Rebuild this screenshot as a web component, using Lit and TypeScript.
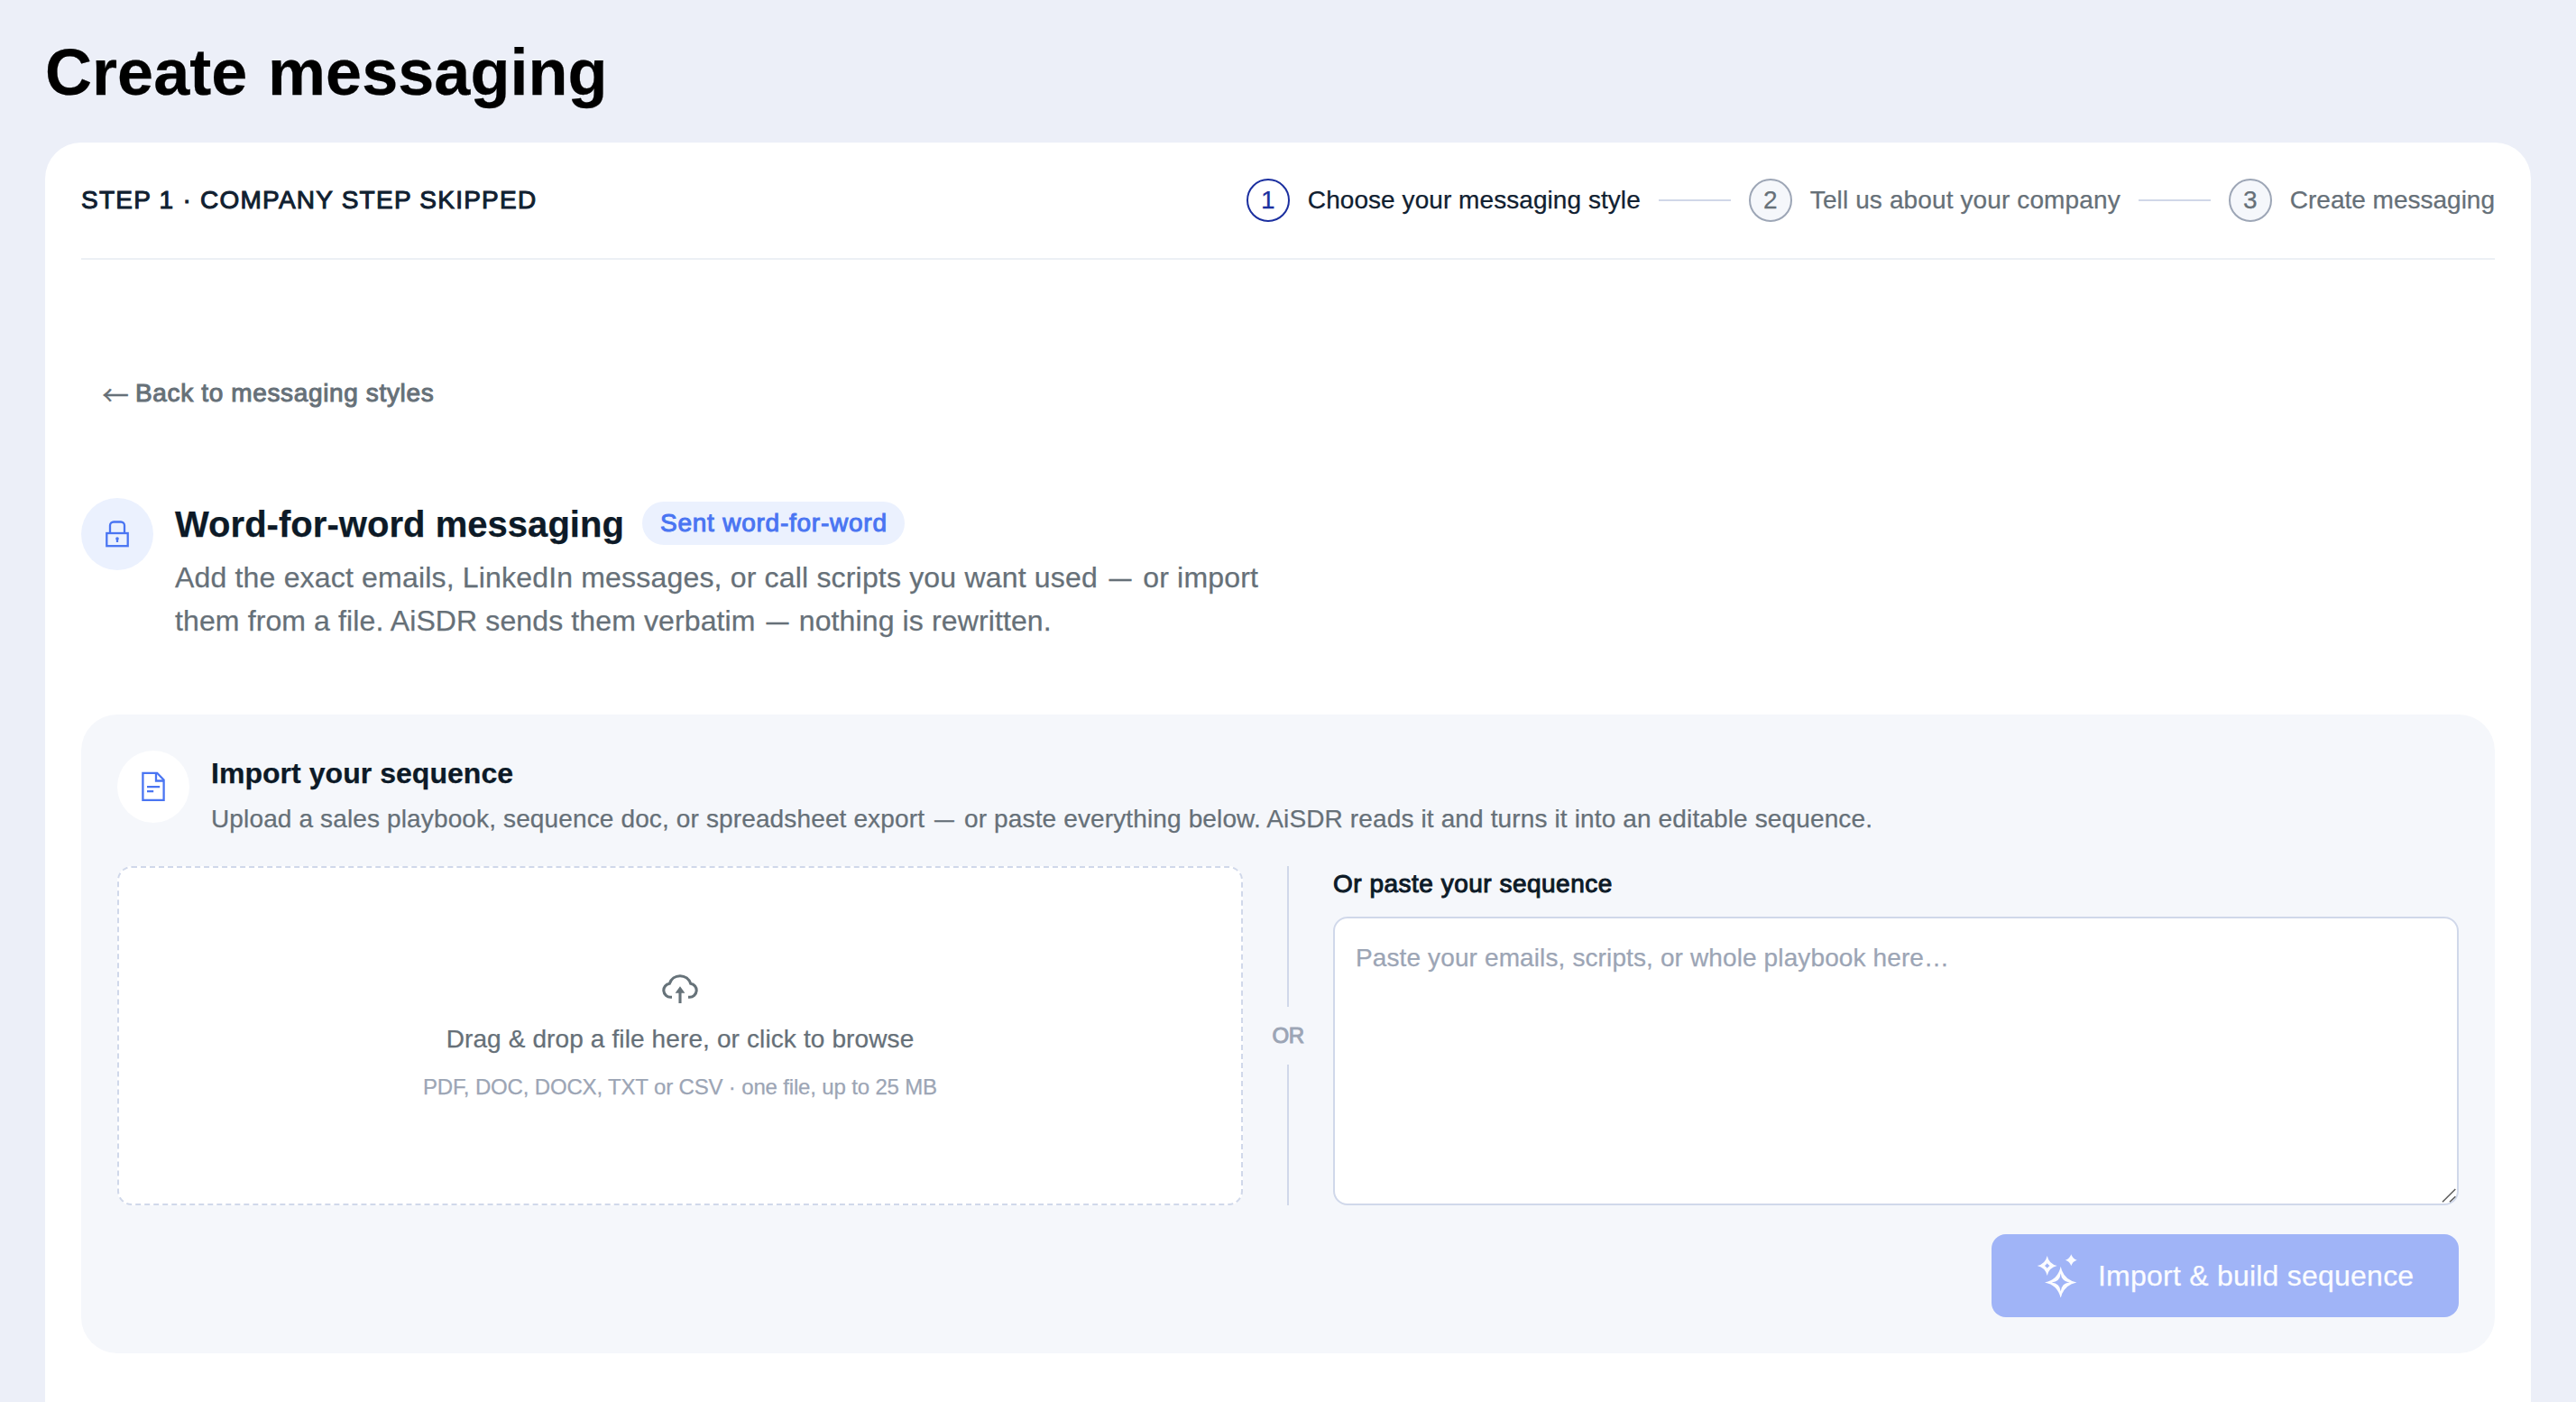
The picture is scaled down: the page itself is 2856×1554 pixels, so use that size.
import { LitElement, html, css, svg, nothing } from "lit";
import { customElement } from "lit/decorators.js";
import { classMap } from "lit/directives/class-map.js";

interface Step {
  label: string;
  key: string;
  active: boolean;
}

const STEPS: Step[] = [
  { label: "Choose your messaging style", key: "style", active: true },
  { label: "Tell us about your company", key: "company", active: false },
  { label: "Create messaging", key: "create", active: false },
];

/** Four-pointed star with concave sides. */
const star = (cx: number, cy: number, r: number, k: number) => {
  const c = r * k;
  return (
    `M${cx} ${cy - r}Q${cx + c} ${cy - c} ${cx + r} ${cy}` +
    `Q${cx + c} ${cy + c} ${cx} ${cy + r}` +
    `Q${cx - c} ${cy + c} ${cx - r} ${cy}` +
    `Q${cx - c} ${cy - c} ${cx} ${cy - r}Z`
  );
};

const lockIcon = svg`<svg class="glyph" viewBox="0 0 80 80" fill="none" stroke="#4a75f2" stroke-width="2.3">
  <rect x="28.3" y="39" width="23.4" height="14.2"></rect>
  <path d="M32 39V30.5a4 4 0 0 1 4-4h8a4 4 0 0 1 4 4V39"></path>
  <circle cx="40" cy="45" r="1.8" fill="#4a75f2" stroke="none"></circle>
  <path d="M40 45V49"></path>
</svg>`;

const docIcon = svg`<svg class="glyph" viewBox="0 0 80 80" fill="none" stroke="#4a75f2" stroke-width="2.3">
  <path d="M28.4 24.8H44.2L51.6 32.4V54.9H28.4Z"></path>
  <path d="M43 24.7V33.5H51.7"></path>
  <path d="M33 40.2H47.2M33 45.1H40.2"></path>
</svg>`;

const cloudIcon = svg`<svg class="cloud" viewBox="0 0 40 32" fill="none" stroke="#667279" stroke-width="3.1">
  <path d="M11 25.2H9.6A7.54 7.54 0 0 1 8.3 10.2A12.3 12.3 0 0 1 31.7 10.2A7.54 7.54 0 0 1 30.4 25.2H29"></path>
  <path d="M20 32V18"></path>
  <path d="M20 13.3L25.4 20.8H14.6Z" fill="#667279" stroke="none"></path>
</svg>`;

const sparkIcon = svg`<svg class="spark" viewBox="0 0 48 48" fill="#fbfcff" fill-rule="evenodd">
  <path d="${star(28.7, 31.4, 17.7, 0.17)}${star(28.7, 31.4, 10, 0.08)}"></path>
  <path d="${star(13.7, 13, 11, 0.18)}${star(13.7, 13, 2.8, 0.4)}"></path>
  <path d="${star(40.3, 6.7, 6.4, 0.24)}"></path>
</svg>`;

@customElement("app-root")
export class AppRoot extends LitElement {
  static styles = css`
    :host {
      display: block;
      box-sizing: border-box;
      width: 100%;
      height: 100vh;
      overflow: hidden;
      padding: 40px 50px 0;
      background: #eceff8;
      color: #0d1a27;
      font-family: "Liberation Sans", Arial, sans-serif;
      font-size: 28px;
      line-height: 40px;
      -webkit-text-stroke: 0.25px currentColor;
    }
    * {
      box-sizing: border-box;
      margin: 0;
    }
    .title {
      font-size: 72px;
      line-height: 80px;
      font-weight: 700;
      color: #000;
      letter-spacing: 0.05px;
      word-spacing: 2.5px;
      margin-bottom: 38px;
    }
    .card {
      height: 1500px;
      padding: 40px 40px 0;
      background: #fff;
      border-radius: 40px 40px 0 0;
    }
    .medium {
      -webkit-text-stroke: 1px currentColor;
    }
    .head {
      display: flex;
      align-items: center;
      justify-content: space-between;
      height: 90px;
      padding-bottom: 40px;
      border-bottom: 2px solid #ecf0f5;
      white-space: nowrap;
    }
    .caption {
      color: #102030;
      letter-spacing: 1.24px;
    }
    .steps,
    .step {
      display: flex;
      align-items: center;
      gap: 20px;
    }
    .step {
      color: #667078;
    }
    .num {
      display: flex;
      align-items: center;
      justify-content: center;
      width: 48px;
      height: 48px;
      border: 2px solid #9da6b6;
      border-radius: 50%;
      background: #f5f7fb;
    }
    .active .num {
      border-color: #1b2f9f;
      background: #fff;
      color: #1b2f9f;
    }
    .active .label {
      color: #102030;
    }
    .style .label {
      letter-spacing: 0.06px;
    }
    .company .label {
      letter-spacing: 0.12px;
    }
    .link {
      width: 80px;
      height: 2px;
      background: #d0d7e8;
    }
    .back {
      display: flex;
      align-items: center;
      height: 48px;
      margin: 124px 0 92px;
      padding-left: 23px;
      color: #667078;
      letter-spacing: 0.64px;
      white-space: nowrap;
    }
    .arrow {
      width: 37px;
      font-family: "Noto Sans CJK JP", sans-serif;
      font-size: 30px;
      letter-spacing: 0;
    }
    .row {
      display: flex;
      gap: 24px;
    }
    .disc {
      flex: none;
      width: 80px;
      height: 80px;
      border-radius: 50%;
      background: #ebf1fe;
    }
    .disc.plain {
      background: #fff;
    }
    .glyph {
      display: block;
      width: 80px;
      height: 80px;
    }
    .hero {
      padding-top: 4px;
    }
    .heading {
      display: flex;
      align-items: center;
      gap: 20px;
      height: 48px;
      margin-bottom: 12px;
    }
    .h2 {
      padding-top: 2px;
      font-size: 40px;
      line-height: 48px;
      font-weight: 700;
      letter-spacing: 0.04px;
    }
    .badge {
      height: 48px;
      padding: 0 19px 0 20px;
      border-radius: 24px;
      background: #ebf1fe;
      color: #4a75f2;
      line-height: 48px;
      letter-spacing: 0.76px;
    }
    .lead {
      font-size: 32px;
      line-height: 48px;
      color: #667078;
      letter-spacing: 0.18px;
      white-space: nowrap;
    }
    .lead-end {
      letter-spacing: 0.12px;
    }
    .dash {
      display: inline-block;
      transform: scaleX(0.78);
    }
    .lead-end .dash {
      margin: 0 -1px;
    }
    .panel {
      margin-top: 80px;
      padding: 40px;
      border-radius: 40px;
      background: #f5f7fb;
    }
    .h3 {
      font-size: 32px;
      line-height: 50px;
      font-weight: 700;
      letter-spacing: 0.04px;
    }
    .sub {
      margin-top: 6px;
      color: #667078;
      letter-spacing: 0.135px;
      white-space: nowrap;
    }
    .sources {
      display: grid;
      grid-template-columns: 1fr 100px 1fr;
      height: 376px;
      margin-top: 32px;
    }
    .drop {
      display: flex;
      flex-direction: column;
      align-items: center;
      padding-top: 118px;
      border: 2px dashed #d0d8ea;
      border-radius: 16px;
      background: #fff;
      color: #667078;
    }
    .cloud {
      width: 40px;
      height: 32px;
      margin-bottom: 20px;
    }
    .prompt {
      letter-spacing: 0.12px;
    }
    .formats {
      margin-top: 16px;
      font-size: 24px;
      line-height: 34px;
      letter-spacing: -0.16px;
      color: #9ca5b5;
    }
    .or {
      display: flex;
      flex-direction: column;
      align-items: center;
      color: #9ca5b5;
      font-size: 24px;
      line-height: 64px;
      letter-spacing: -0.5px;
    }
    .or::before,
    .or::after {
      content: "";
      flex: 1;
      width: 2px;
      background: #d0d8ea;
    }
    .paste {
      display: flex;
      flex-direction: column;
      gap: 16px;
    }
    .paste-label {
      letter-spacing: 0.5px;
    }
    .field {
      position: relative;
      flex: 1;
      display: flex;
    }
    .input {
      flex: 1;
      resize: none;
      padding: 24px 24px 24px 23px;
      border: 2px solid #d0d8ea;
      border-radius: 16px;
      background: #fff;
      font: inherit;
      letter-spacing: 0.12px;
      outline: none;
    }
    .input::placeholder {
      color: #9ca5b5;
      opacity: 1;
    }
    .grip {
      position: absolute;
      right: 2px;
      bottom: 2px;
      width: 18px;
      height: 18px;
    }
    .actions {
      display: flex;
      justify-content: flex-end;
      margin-top: 32px;
    }
    .submit {
      display: flex;
      align-items: center;
      gap: 22px;
      width: 518px;
      height: 92px;
      padding: 0 0 0 48px;
      border: 0;
      border-radius: 16px;
      background: #a0b4f7;
      color: #fbfcff;
      font: inherit;
      font-size: 32px;
      letter-spacing: 0.23px;
      white-space: nowrap;
    }
    .spark {
      width: 48px;
      height: 48px;
    }
  `;

  private renderStep(step: Step, index: number) {
    return html`
      ${index ? html`<span class="link"></span>` : nothing}
      <div class=${classMap({ step: true, active: step.active, [step.key]: true })}>
        <span class="num">${index + 1}</span>
        <span class="label">${step.label}</span>
      </div>
    `;
  }

  render() {
    const dash = html`<span class="dash">—</span>`;
    return html`
      <h1 class="title">Create messaging</h1>
      <main class="card">
        <header class="head">
          <div class="caption medium">STEP 1 · COMPANY STEP SKIPPED</div>
          <div class="steps">${STEPS.map((s, i) => this.renderStep(s, i))}</div>
        </header>

        <div class="back">
          <span class="arrow">←</span><span class="medium">Back to messaging styles</span>
        </div>

        <section class="row">
          <div class="disc">${lockIcon}</div>
          <div class="hero">
            <div class="heading">
              <h2 class="h2">Word-for-word messaging</h2>
              <span class="badge medium">Sent word-for-word</span>
            </div>
            <p class="lead">
              Add the exact emails, LinkedIn messages, or call scripts you want used ${dash} or import<br />
              <span class="lead-end">them from a file. AiSDR sends them verbatim ${dash} nothing is rewritten.</span>
            </p>
          </div>
        </section>

        <section class="panel">
          <div class="row">
            <div class="disc plain">${docIcon}</div>
            <div>
              <h3 class="h3">Import your sequence</h3>
              <p class="sub">
                Upload a sales playbook, sequence doc, or spreadsheet export ${dash} or paste everything below. AiSDR
                reads it and turns it into an editable sequence.
              </p>
            </div>
          </div>
          <div class="sources">
            <div class="drop">
              ${cloudIcon}
              <div class="prompt">Drag &amp; drop a file here, or click to browse</div>
              <div class="formats">PDF, DOC, DOCX, TXT or CSV · one file, up to 25 MB</div>
            </div>
            <div class="or"><span class="medium">OR</span></div>
            <div class="paste">
              <label class="paste-label medium">Or paste your sequence</label>
              <div class="field">
                <textarea class="input" placeholder="Paste your emails, scripts, or whole playbook here…"></textarea>
                <svg class="grip" viewBox="0 0 18 18" stroke="#5c5c5c" stroke-width="1.5">
                  <path d="M2 16.3L16.3 2M10 16.3L16.3 10.2"></path>
                </svg>
              </div>
            </div>
          </div>
          <div class="actions">
            <button class="submit">${sparkIcon}<span>Import &amp; build sequence</span></button>
          </div>
        </section>
      </main>
    `;
  }
}
